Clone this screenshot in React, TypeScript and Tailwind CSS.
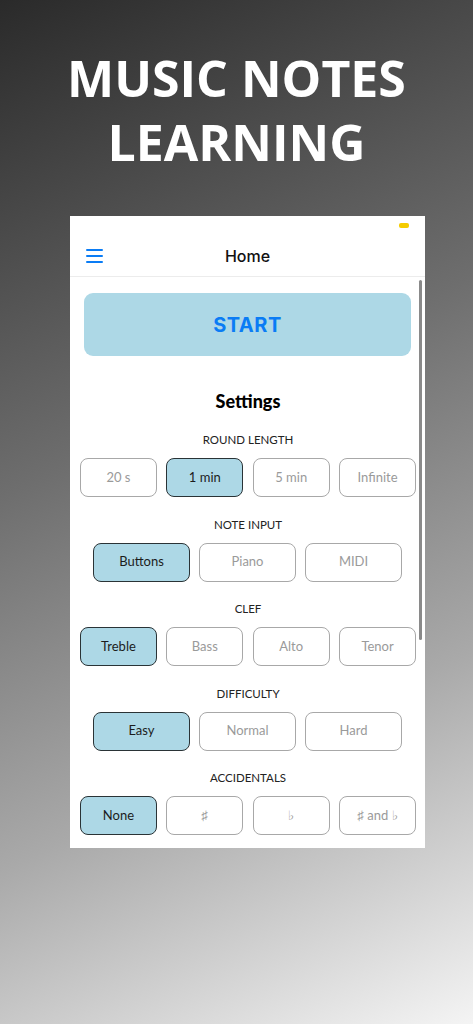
import React from 'react'

type Section = { label: string; options: string[]; selected: number; cols: 3 | 4 }

const SECTIONS: Section[] = [
  { label: 'ROUND LENGTH', options: ['20 s', '1 min', '5 min', 'Infinite'], selected: 1, cols: 4 },
  { label: 'NOTE INPUT', options: ['Buttons', 'Piano', 'MIDI'], selected: 0, cols: 3 },
  { label: 'CLEF', options: ['Treble', 'Bass', 'Alto', 'Tenor'], selected: 0, cols: 4 },
  { label: 'DIFFICULTY', options: ['Easy', 'Normal', 'Hard'], selected: 0, cols: 3 },
  { label: 'ACCIDENTALS', options: ['None', '♯', '♭', '♯ and ♭'], selected: 0, cols: 4 },
]

function Option({ text, active }: { text: string; active: boolean }) {
  return (
    <div
      className={
        active
          ? 'h-[39px] rounded-[8px] border-[1.5px] border-[#2a3336] bg-[#add8e6] flex items-center justify-center text-[13px] text-[#1c1c1c]'
          : 'h-[39px] rounded-[8px] border border-[#a8a8a8] bg-white flex items-center justify-center text-[13px] text-[#9a9a9a]'
      }
    >
      {text}
    </div>
  )
}

export default function App() {
  return (
    <div className="w-full h-[1024px] overflow-hidden bg-[linear-gradient(155deg,#2a2a2a_0%,#6e6e6e_40%,#a9a9a9_70%,#f4f4f4_100%)]">
      {/* title */}
      <div className="pt-[46px] text-center text-white font-bold text-[50px] leading-[64px] font-['Open_Sans',sans-serif]">
        <div>MUSIC NOTES</div>
        <div>LEARNING</div>
      </div>

      {/* phone screen */}
      <div className="relative mt-[42px] ml-[70px] w-[355px] h-[632px] bg-white overflow-hidden">
        <div className="h-[20px] flex justify-end items-start pt-[7px] pr-[16px]">
          <div className="w-[10px] h-[5px] rounded-[2px] bg-[#f5cc00]" />
        </div>
        <div className="relative h-[41px] flex items-center justify-center border-b border-[#ececec]">
          <div className="absolute left-[16px] top-[13px] flex flex-col gap-[4px]">
            <div className="w-[17px] h-[2px] bg-[#0a7cf5] rounded-full" />
            <div className="w-[17px] h-[2px] bg-[#0a7cf5] rounded-full" />
            <div className="w-[17px] h-[2px] bg-[#0a7cf5] rounded-full" />
          </div>
          <span className="text-[16px] font-medium text-[#111] font-['Inter',sans-serif]">Home</span>
        </div>

        {/* scrollbar */}
        <div className="absolute right-[3px] top-[64px] w-[3px] h-[360px] rounded-full bg-[#8a8a8a]" />

        <div className="pl-[10px] pr-[9px] pt-[16px] font-['Lato',sans-serif]">
          <div className="ml-[4px] mr-[5px] h-[63px] rounded-[9px] bg-[#add8e6] flex items-center justify-center">
            <span className="text-[20px] font-bold text-[#0a7cf5] tracking-[0.5px] font-['Inter',sans-serif]">START</span>
          </div>

          <div className="mt-[32.5px] text-center text-[18px] leading-[24px] font-black text-black">Settings</div>

          {SECTIONS.map(s => (
            <div key={s.label}>
              <div className="h-[45.5px] flex flex-col justify-end items-center pb-[10px]">
                <span className="text-[11.5px] leading-[16px] text-[#222]">{s.label}</span>
              </div>
              {s.cols === 4 ? (
                <div className="grid grid-cols-4 gap-[9.5px]">
                  {s.options.map((o, i) => <Option key={o} text={o} active={i === s.selected} />)}
                </div>
              ) : (
                <div className="grid grid-cols-3 gap-[9px] pl-[13px] pr-[14px]">
                  {s.options.map((o, i) => <Option key={o} text={o} active={i === s.selected} />)}
                </div>
              )}
            </div>
          ))}
        </div>
      </div>
    </div>
  )
}
